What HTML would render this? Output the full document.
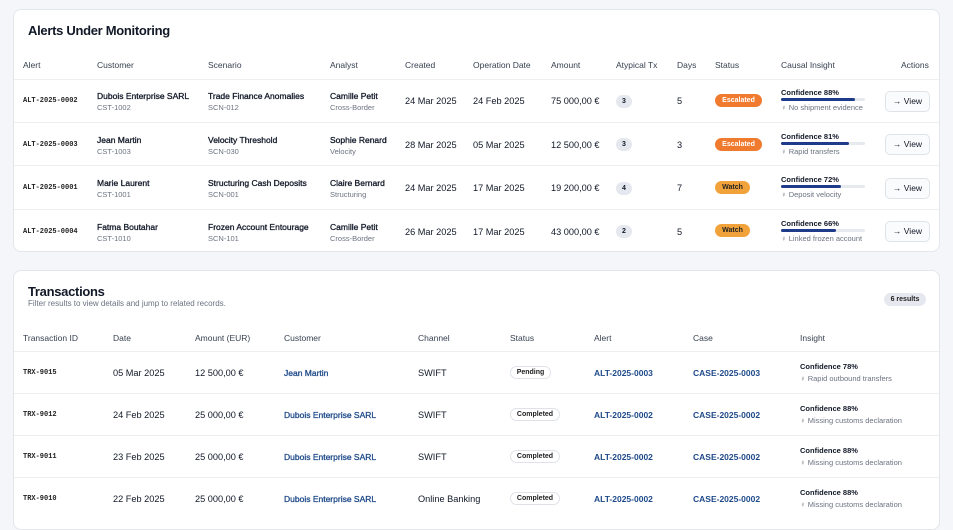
<!DOCTYPE html>
<html><head><meta charset="utf-8"><style>
*{margin:0;padding:0;box-sizing:border-box}
body{width:953px;height:515px;overflow:hidden;background:#f4f6f9;font-family:"Liberation Sans",sans-serif;color:#111827;position:relative}
.card{position:absolute;left:13px;width:927px;background:#fff;border:1px solid #e3e6eb;border-radius:8px}
.a{position:absolute;white-space:nowrap}
.h{font-size:8.5px;color:#374151}
.t{font-size:9.2px;color:#111827}
.n{font-size:8.5px;color:#111827;-webkit-text-stroke:0.3px #111827}
.b{font-weight:bold}
.s{font-size:7.5px;color:#6b7280}
.m{font-family:"Liberation Mono",monospace;font-size:7px;font-weight:bold;color:#222}
.line{position:absolute;left:0;right:0;height:1px;background:#eceef1}
.pill{position:absolute;font-size:7px;font-weight:bold;border-radius:8px;text-align:center}
.l{color:#1e4a8a;font-weight:bold;font-size:8.5px}
.lc{color:#1e4a8a;font-size:8.5px;-webkit-text-stroke:0.3px #1e4a8a}
.bar{position:absolute;height:3px;width:84px;background:#e6e9ee;border-radius:2px}
.bar i{display:block;height:3px;background:#1e3a8a;border-radius:2px}
.btn{position:absolute;left:871px;width:45px;height:21px;border:1px solid #dfe3e8;border-radius:5px;background:#fafbfc;font-size:8.5px;text-align:center;line-height:19px}
.ti{font-size:13px;font-weight:bold;letter-spacing:-0.3px}
</style></head><body>

<div class="card" style="top:9px;height:243px">
<div class="a ti" style="left:14px;top:13px">Alerts Under Monitoring</div>
<div class="a h" style="left:9px;top:50px">Alert</div>
<div class="a h" style="left:83px;top:50px">Customer</div>
<div class="a h" style="left:194px;top:50px">Scenario</div>
<div class="a h" style="left:316px;top:50px">Analyst</div>
<div class="a h" style="left:391px;top:50px">Created</div>
<div class="a h" style="left:459px;top:50px">Operation Date</div>
<div class="a h" style="left:537px;top:50px">Amount</div>
<div class="a h" style="left:602px;top:50px">Atypical Tx</div>
<div class="a h" style="left:663px;top:50px">Days</div>
<div class="a h" style="left:701px;top:50px">Status</div>
<div class="a h" style="left:767px;top:50px">Causal Insight</div>
<div class="a h" style="left:887px;top:50px">Actions</div>
<div class="line" style="top:69px"></div>
<div class="line" style="top:112px"></div>
<div class="line" style="top:155px"></div>
<div class="line" style="top:199px"></div>

<div class="a m" style="left:9px;top:87px">ALT-2025-0002</div>
<div class="a n" style="left:83px;top:81px">Dubois Enterprise SARL</div><div class="a s" style="left:83px;top:93px">CST-1002</div>
<div class="a n" style="left:194px;top:81px">Trade Finance Anomalies</div><div class="a s" style="left:194px;top:93px">SCN-012</div>
<div class="a n" style="left:316px;top:81px">Camille Petit</div><div class="a s" style="left:316px;top:93px">Cross-Border</div>
<div class="a t" style="left:391px;top:86px">24 Mar 2025</div>
<div class="a t" style="left:459px;top:86px">24 Feb 2025</div>
<div class="a t" style="left:537px;top:86px">75 000,00 €</div>
<div class="pill" style="left:602px;top:85px;width:16px;height:13px;line-height:13px;background:#e5e8ee">3</div>
<div class="a t" style="left:663px;top:86px">5</div>
<div class="pill" style="left:701px;top:84px;width:47px;height:13px;line-height:13px;background:#f07a2e;color:#fff">Escalated</div>
<div class="a t b" style="left:767px;top:78px;font-size:7.5px">Confidence 88%</div>
<div class="bar" style="left:767px;top:88px"><i style="width:74px"></i></div>
<div class="a s" style="left:767px;top:93px">♀ No shipment evidence</div>
<div class="btn" style="top:81px">→ View</div>

<div class="a m" style="left:9px;top:131px">ALT-2025-0003</div>
<div class="a n" style="left:83px;top:125px">Jean Martin</div><div class="a s" style="left:83px;top:137px">CST-1003</div>
<div class="a n" style="left:194px;top:125px">Velocity Threshold</div><div class="a s" style="left:194px;top:137px">SCN-030</div>
<div class="a n" style="left:316px;top:125px">Sophie Renard</div><div class="a s" style="left:316px;top:137px">Velocity</div>
<div class="a t" style="left:391px;top:130px">28 Mar 2025</div>
<div class="a t" style="left:459px;top:130px">05 Mar 2025</div>
<div class="a t" style="left:537px;top:130px">12 500,00 €</div>
<div class="pill" style="left:602px;top:128px;width:16px;height:13px;line-height:13px;background:#e5e8ee">3</div>
<div class="a t" style="left:663px;top:130px">3</div>
<div class="pill" style="left:701px;top:128px;width:47px;height:13px;line-height:13px;background:#f07a2e;color:#fff">Escalated</div>
<div class="a t b" style="left:767px;top:122px;font-size:7.5px">Confidence 81%</div>
<div class="bar" style="left:767px;top:132px"><i style="width:68px"></i></div>
<div class="a s" style="left:767px;top:137px">♀ Rapid transfers</div>
<div class="btn" style="top:124px">→ View</div>

<div class="a m" style="left:9px;top:174px">ALT-2025-0001</div>
<div class="a n" style="left:83px;top:168px">Marie Laurent</div><div class="a s" style="left:83px;top:180px">CST-1001</div>
<div class="a n" style="left:194px;top:168px">Structuring Cash Deposits</div><div class="a s" style="left:194px;top:180px">SCN-001</div>
<div class="a n" style="left:316px;top:168px">Claire Bernard</div><div class="a s" style="left:316px;top:180px">Structuring</div>
<div class="a t" style="left:391px;top:173px">24 Mar 2025</div>
<div class="a t" style="left:459px;top:173px">17 Mar 2025</div>
<div class="a t" style="left:537px;top:173px">19 200,00 €</div>
<div class="pill" style="left:602px;top:172px;width:16px;height:13px;line-height:13px;background:#e5e8ee">4</div>
<div class="a t" style="left:663px;top:173px">7</div>
<div class="pill" style="left:701px;top:171px;width:35px;height:13px;line-height:13px;background:#f2a23a;color:#222">Watch</div>
<div class="a t b" style="left:767px;top:165px;font-size:7.5px">Confidence 72%</div>
<div class="bar" style="left:767px;top:175px"><i style="width:60px"></i></div>
<div class="a s" style="left:767px;top:180px">♀ Deposit velocity</div>
<div class="btn" style="top:168px">→ View</div>

<div class="a m" style="left:9px;top:218px">ALT-2025-0004</div>
<div class="a n" style="left:83px;top:212px">Fatma Boutahar</div><div class="a s" style="left:83px;top:224px">CST-1010</div>
<div class="a n" style="left:194px;top:212px">Frozen Account Entourage</div><div class="a s" style="left:194px;top:224px">SCN-101</div>
<div class="a n" style="left:316px;top:212px">Camille Petit</div><div class="a s" style="left:316px;top:224px">Cross-Border</div>
<div class="a t" style="left:391px;top:217px">26 Mar 2025</div>
<div class="a t" style="left:459px;top:217px">17 Mar 2025</div>
<div class="a t" style="left:537px;top:217px">43 000,00 €</div>
<div class="pill" style="left:602px;top:215px;width:16px;height:13px;line-height:13px;background:#e5e8ee">2</div>
<div class="a t" style="left:663px;top:217px">5</div>
<div class="pill" style="left:701px;top:214px;width:35px;height:13px;line-height:13px;background:#f2a23a;color:#222">Watch</div>
<div class="a t b" style="left:767px;top:209px;font-size:7.5px">Confidence 66%</div>
<div class="bar" style="left:767px;top:219px"><i style="width:55px"></i></div>
<div class="a s" style="left:767px;top:224px">♀ Linked frozen account</div>
<div class="btn" style="top:211px">→ View</div>
</div>

<div class="card" style="top:270px;height:260px">
<div class="a ti" style="left:14px;top:13px">Transactions</div>
<div class="a s" style="left:14px;top:28px;font-size:8px">Filter results to view details and jump to related records.</div>
<div class="pill" style="left:870px;top:22px;width:42px;height:13px;line-height:13px;background:#e5e8ee;color:#222">6 results</div>
<div class="a h" style="left:9px;top:62px">Transaction ID</div>
<div class="a h" style="left:99px;top:62px">Date</div>
<div class="a h" style="left:181px;top:62px">Amount (EUR)</div>
<div class="a h" style="left:270px;top:62px">Customer</div>
<div class="a h" style="left:404px;top:62px">Channel</div>
<div class="a h" style="left:496px;top:62px">Status</div>
<div class="a h" style="left:580px;top:62px">Alert</div>
<div class="a h" style="left:679px;top:62px">Case</div>
<div class="a h" style="left:786px;top:62px">Insight</div>
<div class="line" style="top:80px"></div>
<div class="line" style="top:122px"></div>
<div class="line" style="top:164px"></div>
<div class="line" style="top:206px"></div>

<div class="a m" style="left:9px;top:98px">TRX-9015</div>
<div class="a t" style="left:99px;top:97px">05 Mar 2025</div>
<div class="a t" style="left:181px;top:97px">12 500,00 €</div>
<div class="a lc" style="left:270px;top:97px">Jean Martin</div>
<div class="a t" style="left:404px;top:97px">SWIFT</div>
<div class="pill" style="left:496px;top:95px;width:41px;height:13px;line-height:11px;border:1px solid #dfe3e8;color:#222">Pending</div>
<div class="a l" style="left:580px;top:97px">ALT-2025-0003</div>
<div class="a l" style="left:679px;top:97px">CASE-2025-0003</div>
<div class="a t b" style="left:786px;top:91px;font-size:7.5px">Confidence 78%</div>
<div class="a s" style="left:786px;top:103px">♀ Rapid outbound transfers</div>

<div class="a m" style="left:9px;top:140px">TRX-9012</div>
<div class="a t" style="left:99px;top:139px">24 Feb 2025</div>
<div class="a t" style="left:181px;top:139px">25 000,00 €</div>
<div class="a lc" style="left:270px;top:139px">Dubois Enterprise SARL</div>
<div class="a t" style="left:404px;top:139px">SWIFT</div>
<div class="pill" style="left:496px;top:137px;width:50px;height:13px;line-height:11px;border:1px solid #dfe3e8;color:#222">Completed</div>
<div class="a l" style="left:580px;top:139px">ALT-2025-0002</div>
<div class="a l" style="left:679px;top:139px">CASE-2025-0002</div>
<div class="a t b" style="left:786px;top:133px;font-size:7.5px">Confidence 88%</div>
<div class="a s" style="left:786px;top:145px">♀ Missing customs declaration</div>

<div class="a m" style="left:9px;top:182px">TRX-9011</div>
<div class="a t" style="left:99px;top:181px">23 Feb 2025</div>
<div class="a t" style="left:181px;top:181px">25 000,00 €</div>
<div class="a lc" style="left:270px;top:181px">Dubois Enterprise SARL</div>
<div class="a t" style="left:404px;top:181px">SWIFT</div>
<div class="pill" style="left:496px;top:179px;width:50px;height:13px;line-height:11px;border:1px solid #dfe3e8;color:#222">Completed</div>
<div class="a l" style="left:580px;top:181px">ALT-2025-0002</div>
<div class="a l" style="left:679px;top:181px">CASE-2025-0002</div>
<div class="a t b" style="left:786px;top:175px;font-size:7.5px">Confidence 88%</div>
<div class="a s" style="left:786px;top:187px">♀ Missing customs declaration</div>

<div class="a m" style="left:9px;top:224px">TRX-9010</div>
<div class="a t" style="left:99px;top:223px">22 Feb 2025</div>
<div class="a t" style="left:181px;top:223px">25 000,00 €</div>
<div class="a lc" style="left:270px;top:223px">Dubois Enterprise SARL</div>
<div class="a t" style="left:404px;top:223px">Online Banking</div>
<div class="pill" style="left:496px;top:221px;width:50px;height:13px;line-height:11px;border:1px solid #dfe3e8;color:#222">Completed</div>
<div class="a l" style="left:580px;top:223px">ALT-2025-0002</div>
<div class="a l" style="left:679px;top:223px">CASE-2025-0002</div>
<div class="a t b" style="left:786px;top:217px;font-size:7.5px">Confidence 88%</div>
<div class="a s" style="left:786px;top:229px">♀ Missing customs declaration</div>
</div>
</body></html>
